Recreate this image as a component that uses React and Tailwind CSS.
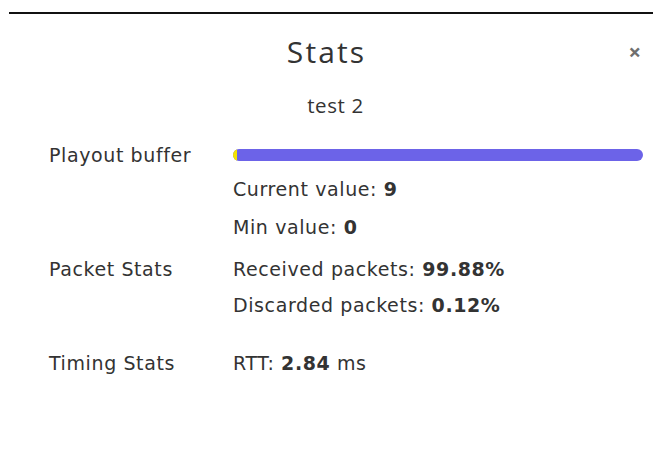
import React from "react";

const bodyFont = { fontFamily: '"DejaVu Sans", "Open Sans", sans-serif' };

function Row({ label, children, className = "" }) {
  return (
    <div className={`flex ${className}`}>
      <div className="w-[184px] shrink-0 text-[19px] leading-[36px] tracking-[0.6px] text-[#333]">{label}</div>
      <div className="flex-1 flex flex-col">{children}</div>
    </div>
  );
}

function Line({ children, className = "" }) {
  return <div className={`text-[19px] leading-[36px] tracking-[0.6px] text-[#333] ${className}`}>{children}</div>;
}

export default function App() {
  return (
    <div className="w-[653px] h-[455px] bg-white relative overflow-hidden" style={{ fontFamily: '"Open Sans", sans-serif' }}>
      <div className="ml-[9px] mt-[12px] border-t-2 border-[#111]" />
      <div className="relative pt-[19px]">
        <h1 className="text-center text-[30px] leading-[38px] tracking-[0.07em] text-[#333]">Stats</h1>
        <button className="absolute right-[12px] top-[26px] text-[22px] leading-none text-[#6f6f6f] font-bold">×</button>
      </div>
      <div className="text-center pl-[18px] text-[20.5px] leading-[24px] tracking-[0.03em] text-[#333] mt-[22px]">test 2</div>
      <div className="pl-[49px] pr-[10px] mt-[20px]" style={bodyFont}>
        <Row label="Playout buffer">
          <div className="h-[36px] flex items-center">
            <div className="w-full h-[12px] rounded-full bg-[#6c63e8] overflow-hidden flex">
              <div className="w-[4px] h-full bg-[#f5e400]" />
            </div>
          </div>
          <Line className="-mt-[2px]">Current value: <b className="font-semibold">9</b></Line>
          <Line className="mt-[2px]">Min value: <b className="font-semibold">0</b></Line>
        </Row>
        <Row label="Packet Stats" className="mt-[6px]">
          <Line>Received packets: <b className="font-semibold">99.88%</b></Line>
          <Line>Discarded packets: <b className="font-semibold">0.12%</b></Line>
        </Row>
        <Row label="Timing Stats" className="mt-[22px]">
          <Line>RTT: <b className="font-semibold">2.84</b> ms</Line>
        </Row>
      </div>
    </div>
  );
}
